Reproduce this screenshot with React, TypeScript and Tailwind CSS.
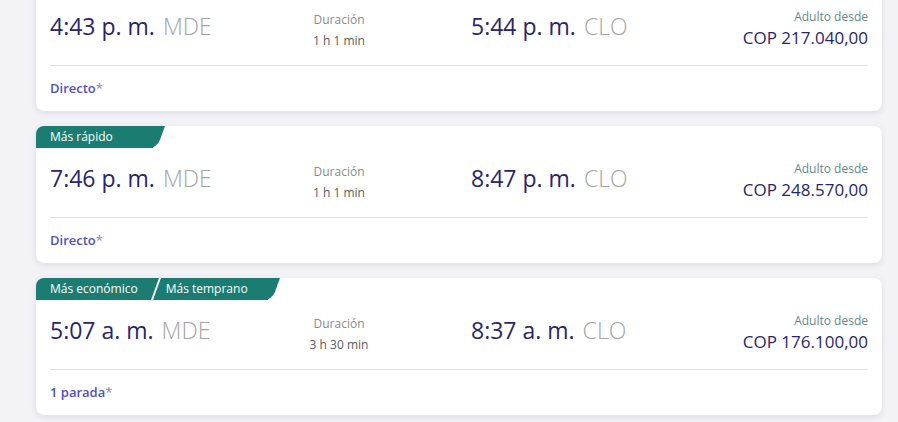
import React from "react";

type Flight = {
  tags: string[];
  dep: string;
  arr: string;
  duration: string;
  price: string;
  stops: string;
};

const FLIGHTS: Flight[] = [
  { tags: [], dep: "4:43 p. m.", arr: "5:44 p. m.", duration: "1 h 1 min", price: "COP 217.040,00", stops: "Directo" },
  { tags: ["Más rápido"], dep: "7:46 p. m.", arr: "8:47 p. m.", duration: "1 h 1 min", price: "COP 248.570,00", stops: "Directo" },
  { tags: ["Más económico", "Más temprano"], dep: "5:07 a. m.", arr: "8:37 a. m.", duration: "3 h 30 min", price: "COP 176.100,00", stops: "1 parada" },
];

function Tags({ tags }: { tags: string[] }) {
  if (tags.length === 0) return <div className="h-[22px]" />;
  return (
    <div className="flex h-[22px] items-stretch">
      <div
        className={
          "flex items-center bg-[#1b7c72] rounded-tl-lg pl-[14px] text-[12px] text-white " +
          (tags.length === 1 ? "pr-[40px]" : "pr-[20px]")
        }
      >
        {tags.map((t, i) => (
          <React.Fragment key={i}>
            {i > 0 && <span className="ml-[17px] mr-[9px] h-[22px] w-[2px] bg-white skew-x-[-20deg]" />}
            <span className="leading-none">{t}</span>
          </React.Fragment>
        ))}
      </div>
      <div className="relative w-[12px] overflow-hidden">
        <div className="absolute inset-y-0 -left-[10px] w-[18px] bg-[#1b7c72] skew-x-[-20deg] rounded-br-lg" />
      </div>
    </div>
  );
}

function FlightCard({ f }: { f: Flight }) {
  return (
    <div className="bg-white rounded-lg shadow-[0_2px_6px_rgba(30,30,80,0.10)] h-[137px] flex flex-col">
      <Tags tags={f.tags} />
      <div className="flex items-center px-[14px] h-[69px]">
        <div className="w-[240px] text-[23px] leading-none -mt-[8px]">
          <span className="text-[#2a256b]">{f.dep}</span>
          <span className="ml-[8px] font-light text-[#a4a4a4]">MDE</span>
        </div>
        <div className="w-[98px] text-center text-[12px] leading-[21px] -mt-[1px]">
          <div className="text-[#8c8c8c]">Duración</div>
          <div className="text-[#5a5a5a]">{f.duration}</div>
        </div>
        <div className="ml-[83px] text-[23px] leading-none -mt-[8px]">
          <span className="text-[#2a256b]">{f.arr}</span>
          <span className="ml-[8px] font-light text-[#a4a4a4]">CLO</span>
        </div>
        <div className="flex-1 text-right -mt-[6px]">
          <div className="text-[12px] leading-[20px] text-[#5f8a8b]">Adulto desde</div>
          <div className="text-[17px] leading-[22px] text-[#2a256b]">{f.price}</div>
        </div>
      </div>
      <div className="mx-[14px] border-t border-[#e2e2e6]" />
      <div className="px-[14px] pt-[13px] text-[13px] font-semibold text-[#4f4fc6]">
        {f.stops}
        <span className="font-normal text-[#8080d8]">*</span>
      </div>
    </div>
  );
}

export default function App() {
  return (
    <div className="min-h-screen bg-[#f2f2f7] overflow-hidden" style={{ fontFamily: '"Open Sans", "Noto Sans", sans-serif' }}>
      <div className="-mt-[26px] ml-[36px] w-[846px] flex flex-col gap-[15px]">
        {FLIGHTS.map((f, i) => (
          <FlightCard key={i} f={f} />
        ))}
      </div>
    </div>
  );
}
